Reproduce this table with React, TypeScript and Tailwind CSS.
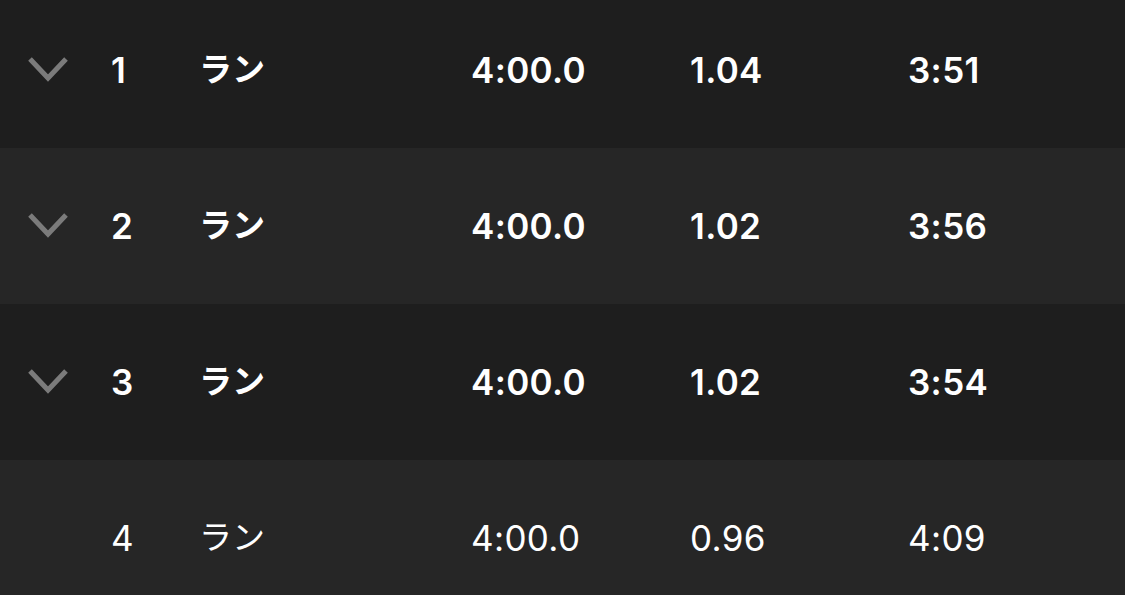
import React from "react";

type Lap = {
  no: number;
  kind: string;
  time: string;
  distance: string;
  pace: string;
  expandable: boolean;
};

const laps: Lap[] = [
  { no: 1, kind: "ラン", time: "4:00.0", distance: "1.04", pace: "3:51", expandable: true },
  { no: 2, kind: "ラン", time: "4:00.0", distance: "1.02", pace: "3:56", expandable: true },
  { no: 3, kind: "ラン", time: "4:00.0", distance: "1.02", pace: "3:54", expandable: true },
  { no: 4, kind: "ラン", time: "4:00.0", distance: "0.96", pace: "4:09", expandable: false },
];

const Chevron = () => (
  <svg width="42" height="28" viewBox="0 0 42 28" fill="none">
    <path
      d="M3 3 L21 22 L39 3"
      stroke="#7b7b7b"
      strokeWidth="5"
      strokeLinecap="butt"
      strokeLinejoin="miter"
    />
  </svg>
);

const LapRow: React.FC<{ lap: Lap; index: number }> = ({ lap, index }) => {
  const bg = index % 2 === 0 ? "bg-[#1e1e1e]" : "bg-[#262626]";
  const weight = lap.expandable ? "font-semibold" : "font-normal";
  return (
    <div
      className={`flex h-[156px] items-center pl-[27px] text-[35px] tracking-[0.01em] text-white ${bg} ${weight}`}
    >
      <div className="flex w-[84px] items-center">
        {lap.expandable && <Chevron />}
      </div>
      <div className="w-[88px]">{lap.no}</div>
      <div className="w-[272px] text-[33px] tracking-normal">{lap.kind}</div>
      <div className="w-[219px]">{lap.time}</div>
      <div className="w-[218px]">{lap.distance}</div>
      <div>{lap.pace}</div>
    </div>
  );
};

export default function App() {
  return (
    <div
      className="h-[595px] w-[1125px] overflow-hidden bg-[#262626]"
      style={{ fontFamily: '"Inter", "Noto Sans CJK JP", sans-serif' }}
    >
      <div className="-mt-[8px]">
        {laps.map((lap, i) => (
          <LapRow key={lap.no} lap={lap} index={i} />
        ))}
      </div>
    </div>
  );
}
